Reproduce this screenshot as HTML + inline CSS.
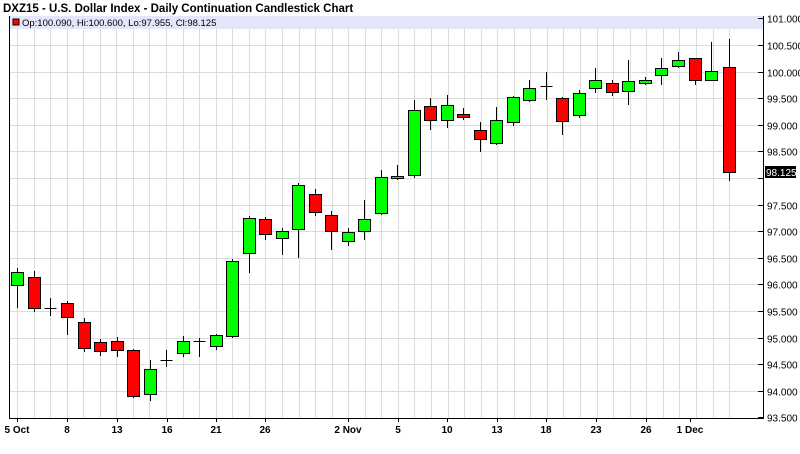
<!DOCTYPE html>
<html><head><meta charset="utf-8"><style>
body{margin:0;background:#fff;width:800px;height:454px;overflow:hidden}
svg{display:block;font-family:"Liberation Sans",Arial,sans-serif}
</style></head><body>
<svg width="800" height="454" viewBox="0 0 800 454" xmlns="http://www.w3.org/2000/svg">
<rect width="800" height="454" fill="#fff"/>
<text x="3" y="12" font-size="11.5" font-weight="bold" fill="#000">DXZ15 - U.S. Dollar Index - Daily Continuation Candlestick Chart</text>
<rect x="9" y="16" width="754" height="13" fill="#e6e6fa"/>
<g id="grid" stroke="#dcdcdc" stroke-width="1"></g>
<rect x="13" y="19" width="6" height="6" fill="#f00" stroke="#000" stroke-width="1"/>
<text x="22" y="26" font-size="9.5" fill="#000">Op:100.090, Hi:100.600, Lo:97.955, Cl:98.125</text>
<g id="c"></g>
<line x1="9.5" y1="16" x2="9.5" y2="418.5" stroke="#000"/>
<line x1="9" y1="418.5" x2="763.5" y2="418.5" stroke="#000"/>
<line x1="763.5" y1="16" x2="763.5" y2="419" stroke="#000"/>
<g id="ax" font-size="10" fill="#000"></g>
<rect x="765" y="166" width="31" height="12" fill="#000"/>
<text x="766" y="176" font-size="10" fill="#fff">98.125</text>
</svg>
<script>
var ns="http://www.w3.org/2000/svg";
function el(t,a,p,txt){var e=document.createElementNS(ns,t);for(var k in a)e.setAttribute(k,a[k]);if(txt)e.textContent=txt;p.appendChild(e);return e;}
var g=document.getElementById('grid'),ax=document.getElementById('ax'),c=document.getElementById('c');
for(var i=0;i<44;i++){var x=Math.round(17+i*16.56)+0.5;el('line',{x1:x,y1:29,x2:x,y2:418},g);}
for(var j=0;j<=15;j++){var p=101-j*0.5;var y=Math.round(18.4+j*26.6)+0.5;
 if(j>0&&j<15)el('line',{x1:10,y1:y,x2:763,y2:y},g);
 el('line',{x1:758,y1:y,x2:763,y2:y,stroke:'#000'},ax);
 if(j!==6)el('text',{x:767,y:y+4},ax,p.toFixed(3));}
var xl=[[17,'5 Oct'],[67,'8'],[117,'13'],[167,'16'],[216,'21'],[265,'26'],[348,'2 Nov'],[398,'5'],[447,'10'],[497,'13'],[546,'18'],[596,'23'],[646,'26'],[690,'1 Dec']];
xl.forEach(function(a){el('line',{x1:a[0]+.5,y1:418,x2:a[0]+.5,y2:422,stroke:'#000'},ax);
 el('text',{x:a[0],y:433,'text-anchor':'middle','font-weight':'bold','font-size':'10'},ax,a[1]);});
var d=[
[17,'g',272,285,268,308],[34,'r',277,308,271,312],[50,'d',308,308,298,316],[67,'r',303,317,301,335],
[84,'r',322,348,318,352],[100,'r',342,351,339,356],[117,'r',341,350,337,357],[133,'r',350,396,349,398],
[150,'g',369,394,360,401],[166,'d',360,360,350,367],[183,'g',341,353,336,357],[199,'d',341,341,338,357],
[216,'g',335,346,334,350],[232,'g',261,336,259,338],[249,'g',218,253,216,273],[265,'r',219,234,217,240],
[282,'g',231,238,228,255],[298,'g',185,229,183,258],[315,'r',194,212,189,216],[331,'r',215,231,211,250],
[348,'g',232,241,228,246],[364,'g',219,231,200,240],[381,'g',177,213,170,215],[397,'g',176,178,165,180],
[414,'g',110,175,100,178],[430,'r',106,120,98,130],[447,'g',105,120,95,128],[463,'r',114,117,108,120],
[480,'r',130,139,122,152],[496,'g',120,143,107,145],[513,'g',97,122,96,126],[529,'g',88,100,80,102],
[546,'d',86,86,72,100],[562,'r',98,121,97,135],[579,'g',93,115,90,118],[595,'g',80,88,68,93],
[612,'r',83,92,80,96],[628,'g',81,91,60,105],[645,'g',80,83,77,85],[661,'g',68,75,58,85],
[678,'g',60,66,52,68],[695,'r',58,80,58,85],[711,'g',71,80,42,81],[729,'r',67,172,39,181]];
d.forEach(function(a){var x=a[0]+.5;
 el('line',{x1:x,y1:a[4],x2:x,y2:a[5],stroke:'#000'},c);
 if(a[1]==='d'){el('line',{x1:x-6,y1:a[2]+.5,x2:x+6,y2:a[2]+.5,stroke:'#000'},c);return;}
 el('rect',{x:a[0]-6+.5,y:a[2]+.5,width:12,height:Math.max(2,a[3]-a[2]),fill:a[1]==='g'?'#00ff00':'#ff0000',stroke:'#000'},c);});
</script>
</body></html>
